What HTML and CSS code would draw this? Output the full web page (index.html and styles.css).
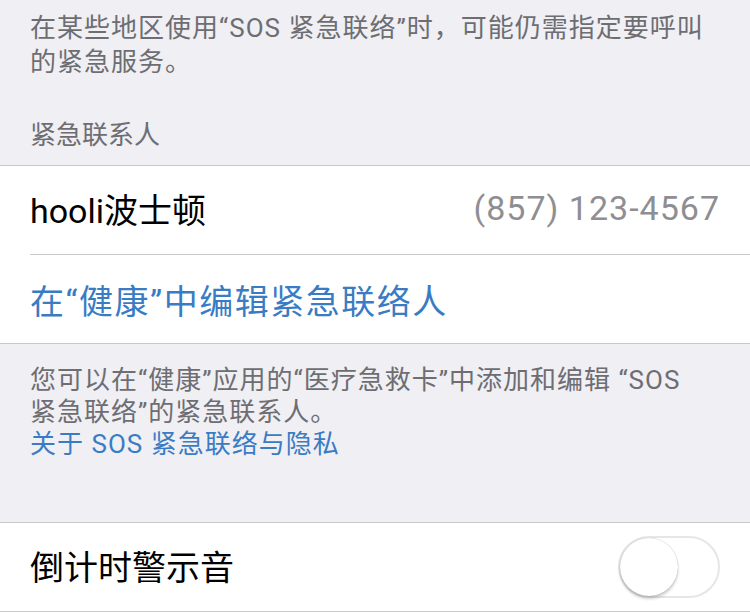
FILE: index.html
```html
<!DOCTYPE html>
<html>
<head>
<meta charset="utf-8"/>
<title>SOS 紧急联络</title>
<link rel="stylesheet" href="styles.css">
</head>
<body>

<p class="note note-top">在某些地区使用“SOS 紧急联络”时，可能仍需指定要呼叫<br>的紧急服务。</p>

<h3 class="group-header">紧急联系人</h3>

<ul class="group">
<li class="cell">
  <span class="cell-title">hooli波士顿</span>
  <span class="cell-detail">(857) 123-4567</span>
</li>
<li class="cell">
  <a class="cell-link" href="#">在“健康”中编辑紧急联络人</a>
</li>
</ul>

<p class="note note-footer">您可以在“健康”应用的“医疗急救卡”中添加和编辑 “SOS<br>紧急联络”的紧急联系人。<br>
<a class="note-link" href="#">关于 SOS 紧急联络与隐私</a></p>

<ul class="group group-last">
<li class="cell">
  <span class="cell-title">倒计时警示音</span>
  <span class="switch"><span class="switch-knob"></span></span>
</li>
</ul>

</body>
</html>
```

FILE: styles.css
```css
body {
   margin: 0;
   background-color: #efeff4;
   font-family: Roboto, "Noto Sans CJK SC", sans-serif;
   color: #000;
}

a {
   text-decoration: none;
}

.note {
   margin: 0;
   padding: 0 30px;
   font-size: 26px;
   letter-spacing: 1px;
   color: #6d6d72;
}

.note-top {
   padding-top: 11px;
   line-height: 34px;
}

.group-header {
   margin: 0;
   padding: 40px 30px 14px;
   font-size: 26px;
   line-height: 32px;
   font-weight: normal;
   color: #6d6d72;
}

.group {
   list-style: none;
   margin: 0;
   padding: 0 0 0 30px;
   background-color: #fff;
   border-top: 1px solid #c8c7cc;
   border-bottom: 1px solid #c8c7cc;
}

.cell {
   display: flex;
   align-items: center;
   justify-content: space-between;
   height: 88px;
   padding-right: 30px;
   font-size: 34px;
}

.cell + .cell {
   border-top: 1px solid #c8c7cc;
}

.cell-title {
   margin-top: -4px;
}

.cell-detail {
   margin-top: -4px;
   letter-spacing: 1px;
   color: #8e8e93;
}

.cell-link {
   letter-spacing: 1.5px;
   color: #3a7cc4;
}

.note-footer {
   padding-top: 20px;
   padding-bottom: 62px;
   line-height: 32px;
}

.note-link {
   color: #3a7cc4;
}

.switch {
   display: block;
   position: relative;
   width: 98px;
   height: 58px;
   border: 2px solid #e6e6e8;
   border-radius: 31px;
   background-color: #fff;
}

.switch-knob {
   position: absolute;
   left: 0;
   top: 0;
   width: 58px;
   height: 58px;
   border-radius: 50%;
   background-color: #fff;
   box-shadow: 0 3px 3px rgba(0, 0, 0, 0.18), 0 0 1px rgba(0, 0, 0, 0.35);
}
```
